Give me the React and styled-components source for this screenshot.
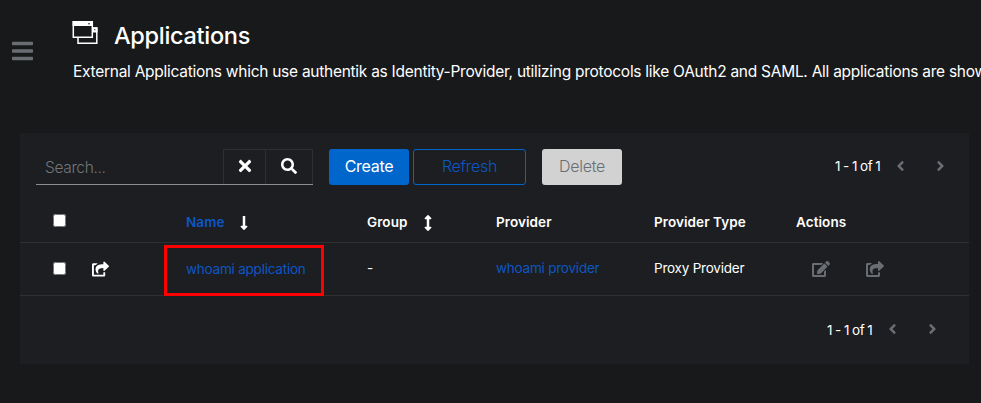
import React from "react";
import styled, { createGlobalStyle, css } from "styled-components";
import {
  FaBars, FaTimes, FaSearch, FaLongArrowAltDown, FaArrowsAltV,
  FaShareSquare, FaEdit, FaAngleLeft, FaAngleRight,
} from "react-icons/fa";

const GlobalStyle = createGlobalStyle`
  *, *::before, *::after { box-sizing: border-box; }
  body { margin: 0; background: #18191a; overflow: hidden; }
  h1, p { margin: 0; font-weight: 400; }
`;

const Page = styled.div`
  width: 981px;
  height: 403px;
  overflow: hidden;
  color: #fff;
  font-family: Inter, "Open Sans", sans-serif;
  font-size: 13.5px;
  line-height: 21px;
`;

const Header = styled.header`
  display: flex;
  height: 133px;
`;

const MenuButton = styled.button`
  flex: none;
  display: flex;
  width: 61px;
  padding: 39px 0 0 12px;
  border: 0;
  background: none;
  color: #6a6e73;
  svg { width: 21px; height: 24px; }
`;

const Heading = styled.div`
  padding: 20px 0 0 11px;
  white-space: nowrap;
`;

const TitleRow = styled.div`
  display: flex;
  gap: 16px;
  height: 31px;
`;

const Title = styled.h1`
  font-size: 23.5px;
  line-height: 31px;
  font-weight: 500;
  letter-spacing: -0.3px;
`;

const Description = styled.p`
  margin: 9px 0 0 1px;
  font-size: 15.5px;
  line-height: 24px;
  letter-spacing: -0.27px;
`;

const Card = styled.main`
  width: 949px;
  height: 231px;
  margin-left: 20px;
  background: #1c1e21;
`;

const Toolbar = styled.div`
  display: flex;
  align-items: center;
  height: 69px;
  padding: 0 0 2px 16px;
`;

const SearchGroup = styled.div`
  display: flex;
  width: 277px;
  height: 36px;
  border-bottom: 1px solid #8a8d90;
`;

const SearchInput = styled.input`
  width: 187px;
  padding: 3px 9px 0;
  border: 0;
  outline: 0;
  background: transparent;
  font: 300 15.5px/24px Inter, sans-serif;
  letter-spacing: -0.35px;
  &::placeholder { color: #72767b; opacity: 1; }
`;

const IconButton = styled.button`
  display: flex;
  align-items: center;
  justify-content: center;
  width: ${(p) => p.$width}px;
  padding: 0 0 1px;
  border: 1px solid #2d2f33;
  border-width: 1px 0 0 1px;
  background: none;
  color: #fff;
  &:last-child { border-right-width: 1px; }
  svg { width: ${(p) => p.$icon}px; height: ${(p) => p.$icon}px; }
`;

const variants = {
  primary: css`background: #06c; color: #fff;`,
  secondary: css`border: 1px solid #06c; color: #0c56c5;`,
  disabled: css`background: #d2d2d2; color: #6a6e73;`,
};

const Button = styled.button`
  width: ${(p) => p.$width}px;
  height: 36px;
  margin-left: ${(p) => p.$gap}px;
  padding: 0 0 1px;
  border: 0;
  border-radius: 3px;
  background: none;
  font: ${(p) => p.$weight || 400} 16px/24px Inter, sans-serif;
  letter-spacing: -0.3px;
  ${(p) => variants[p.$variant]}
`;

const Pagination = styled.div`
  display: flex;
  align-items: center;
  margin-left: auto;
  padding-right: ${(p) => p.$inset}px;
  svg { width: 11px; height: 16px; color: #6a6e73; margin-top: -2px; }
`;

const PageCount = styled.span`
  width: 47px;
  margin-right: 13px;
  letter-spacing: -0.4px;
  word-spacing: -0.4px;
  white-space: nowrap;
`;

const Chevrons = styled.div`
  display: flex;
  gap: 29px;
`;

const Row = styled.div`
  display: grid;
  grid-template-columns: 33px 39px 94px 181px 129px 158px 142px 1fr;
  grid-template-rows: 100%;
  align-items: center;
  height: ${(p) => p.$height}px;
  padding-bottom: ${(p) => (p.$head ? 4 : 1)}px;
  border-bottom: 1px solid #2e3033;
  font-weight: ${(p) => (p.$head ? 600 : 400)};
  letter-spacing: ${(p) => (p.$head ? "0.08px" : "-0.22px")};
  svg { display: block; }
`;

const Cell = styled.div`
  display: flex;
  align-items: center;
  gap: 12px;
  padding-top: ${(p) => p.$drop || 0}px;
  color: ${(p) => (p.$link ? "#0c56c5" : "#fff")};
  white-space: nowrap;
  svg { width: ${(p) => p.$icon || 16}px; height: 16px; color: #fff; }
`;

const Checkbox = styled.input`
  width: 13px;
  height: 13px;
  margin: 0;
`;

const Highlight = styled.div`
  display: flex;
  align-items: center;
  width: 160px;
  height: 51px;
  margin: 4px 0 0 -22px;
  padding: 0 0 3px 19px;
  border: 3px solid #f00;
`;

const Actions = styled.div`
  display: flex;
  gap: 36px;
  padding-left: 16px;
  svg { width: 18px; height: 16px; color: #6a6e73; }
`;

const Footer = styled.div`
  display: flex;
  align-items: center;
  height: 68px;
`;

function ApplicationsIcon() {
  return (
    <svg width="26" height="25" viewBox="0 0 26 25" fill="none">
      <path d="M6 18V23.3H24.8V8H20" stroke="#fff" strokeWidth="1.5" />
      <path d="M20 7.4H25.5V12.5H20Z" fill="#fff" />
      <path d="M1.3 1.7H20.3V17.2H1.3Z" fill="#18191a" stroke="#fff" strokeWidth="1.5" />
      <path d="M.6 1H21V6H.6Z" fill="#fff" />
      <circle cx="17" cy="3.7" r=".8" fill="#18191a" />
      <circle cx="22.8" cy="9.7" r=".6" fill="#18191a" />
    </svg>
  );
}

function Pager({ inset }) {
  return (
    <Pagination $inset={inset}>
      <PageCount>1 - 1 of 1</PageCount>
      <Chevrons><FaAngleLeft /><FaAngleRight /></Chevrons>
    </Pagination>
  );
}

export default function App() {
  return (
    <Page>
      <GlobalStyle />
      <Header>
        <MenuButton aria-label="Menu"><FaBars preserveAspectRatio="none" /></MenuButton>
        <Heading>
          <TitleRow>
            <ApplicationsIcon />
            <Title>Applications</Title>
          </TitleRow>
          <Description>
            External Applications which use authentik as Identity-Provider, utilizing protocols like OAuth2 and SAML. All applications are shown
          </Description>
        </Heading>
      </Header>
      <Card>
        <Toolbar>
          <SearchGroup>
            <SearchInput placeholder="Search..." />
            <IconButton $width={42} $icon={18} aria-label="Clear"><FaTimes /></IconButton>
            <IconButton $width={48} $icon={16} aria-label="Search"><FaSearch /></IconButton>
          </SearchGroup>
          <Button $variant="primary" $width={80} $gap={16}>Create</Button>
          <Button $variant="secondary" $weight={300} $width={113} $gap={4}>Refresh</Button>
          <Button $variant="disabled" $weight={300} $width={80} $gap={16}>Delete</Button>
          <Pager inset={23} />
        </Toolbar>
        <Row $height={41} $head>
          <span />
          <Checkbox type="checkbox" />
          <span />
          <Cell $link $drop={5}>Name <FaLongArrowAltDown /></Cell>
          <Cell $drop={5}>Group <FaArrowsAltV /></Cell>
          <Cell $drop={5}>Provider</Cell>
          <Cell $drop={5}>Provider Type</Cell>
          <Cell $drop={5}>Actions</Cell>
        </Row>
        <Row $height={53}>
          <span />
          <Checkbox type="checkbox" />
          <Cell $icon={17}><FaShareSquare /></Cell>
          <Cell $link><Highlight>whoami application</Highlight></Cell>
          <Cell>-</Cell>
          <Cell $link>whoami provider</Cell>
          <Cell>Proxy Provider</Cell>
          <Actions><FaEdit /><FaShareSquare /></Actions>
        </Row>
        <Footer><Pager inset={31} /></Footer>
      </Card>
    </Page>
  );
}
